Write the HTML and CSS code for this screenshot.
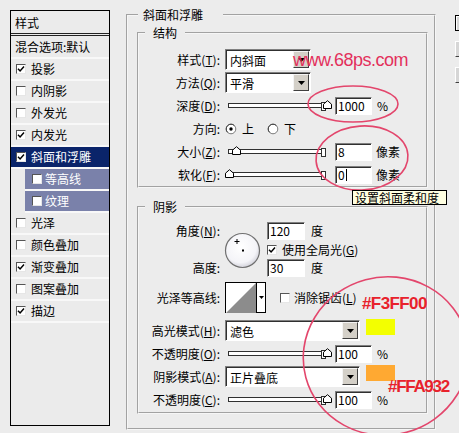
FILE: index.html
```html
<!DOCTYPE html>
<html lang="zh-CN">
<head>
<meta charset="utf-8">
<title>图层样式 - 斜面和浮雕</title>
<link rel="stylesheet" href="styles.css">
</head>
<body>
<div class="dialog">
  <div class="styles-panel">
    <div class="sp-head">样式</div>
    <div class="sp-row sp-blend">混合选项:默认</div>
    <div class="sp-row"><span class="cb"><svg viewBox="0 0 8 8"><path d="M1 3.8l2.1 2.2L7 1.6"/></svg></span>投影</div>
    <div class="sp-row"><span class="cb"></span>内阴影</div>
    <div class="sp-row"><span class="cb"></span>外发光</div>
    <div class="sp-row"><span class="cb"><svg viewBox="0 0 8 8"><path d="M1 3.8l2.1 2.2L7 1.6"/></svg></span>内发光</div>
    <div class="sp-row selected"><span class="cb"><svg viewBox="0 0 8 8"><path d="M1 3.8l2.1 2.2L7 1.6"/></svg></span>斜面和浮雕</div>
    <div class="sp-row sub"><span class="cb"></span>等高线</div>
    <div class="sp-row sub"><span class="cb"></span>纹理</div>
    <div class="sp-row"><span class="cb"></span>光泽</div>
    <div class="sp-row"><span class="cb"></span>颜色叠加</div>
    <div class="sp-row"><span class="cb"><svg viewBox="0 0 8 8"><path d="M1 3.8l2.1 2.2L7 1.6"/></svg></span>渐变叠加</div>
    <div class="sp-row"><span class="cb"></span>图案叠加</div>
    <div class="sp-row"><span class="cb"><svg viewBox="0 0 8 8"><path d="M1 3.8l2.1 2.2L7 1.6"/></svg></span>描边</div>
  </div>

  <fieldset class="group main">
    <legend class="main-legend">斜面和浮雕</legend>

    <fieldset class="group inner struct">
      <legend class="inner-legend">结构</legend>
      <div class="row">
        <span class="lbl">样式(<u>T</u>):</span>
        <div class="select w86"><span class="sel-text">内斜面</span><span class="dd"><svg viewBox="0 0 7 4" width="7" height="4"><path d="M0 0h7L3.5 4z"/></svg></span></div>
      </div>
      <div class="row">
        <span class="lbl">方法(<u>Q</u>):</span>
        <div class="select w86"><span class="sel-text">平滑</span><span class="dd"><svg viewBox="0 0 7 4" width="7" height="4"><path d="M0 0h7L3.5 4z"/></svg></span></div>
      </div>
      <div class="row">
        <span class="lbl">深度(<u>D</u>):</span>
        <div class="slider"><div class="track"></div><svg class="thumb" style="left:98px" viewBox="0 0 9 9" width="9" height="9"><path d="M0.5 8.5V4.2L4.5 0.7L8.5 4.2V8.5Z"/></svg></div>
        <span class="input">1000</span><span class="unit">%</span>
      </div>
      <div class="row">
        <span class="lbl">方向:</span>
        <span class="radio-opt"><svg class="radio" viewBox="0 0 12 12" width="12" height="12"><circle cx="6" cy="6" r="4.8" fill="#fff" stroke="#7a7a7a"/><path d="M2.6 9.4A4.8 4.8 0 0 1 9.4 2.6" fill="none" stroke="#404040"/><circle cx="6" cy="6" r="1.7" fill="#000"/></svg>上</span>
        <span class="radio-opt"><svg class="radio" viewBox="0 0 12 12" width="12" height="12"><circle cx="6" cy="6" r="4.8" fill="#fff" stroke="#7a7a7a"/><path d="M2.6 9.4A4.8 4.8 0 0 1 9.4 2.6" fill="none" stroke="#404040"/></svg>下</span>
      </div>
      <div class="row">
        <span class="lbl">大小(<u>Z</u>):</span>
        <div class="slider"><div class="track"></div><svg class="thumb" style="left:7px" viewBox="0 0 9 9" width="9" height="9"><path d="M0.5 8.5V4.2L4.5 0.7L8.5 4.2V8.5Z"/></svg></div>
        <span class="input">8</span><span class="unit px">像素</span>
      </div>
      <div class="row">
        <span class="lbl">软化(<u>F</u>):</span>
        <div class="slider"><div class="track"></div><svg class="thumb" style="left:0px" viewBox="0 0 9 9" width="9" height="9"><path d="M0.5 8.5V4.2L4.5 0.7L8.5 4.2V8.5Z"/></svg></div>
        <span class="input">0<span class="caret"></span></span><span class="unit px">像素</span>
      </div>
    </fieldset>

    <fieldset class="group inner shadow">
      <legend class="inner-legend">阴影</legend>
      <div class="angle-block">
        <div class="ab-labels">
          <span class="lbl">角度(<u>N</u>):</span>
          <span class="lbl"></span>
          <span class="lbl">高度:</span>
        </div>
        <svg class="dial" viewBox="0 0 37 37" width="37" height="37">
          <defs>
            <radialGradient id="dialfill" cx="45%" cy="40%" r="65%">
              <stop offset="0" stop-color="#ffffff"/>
              <stop offset="0.7" stop-color="#f4f4f8"/>
              <stop offset="1" stop-color="#c8c8d2"/>
            </radialGradient>
          </defs>
          <circle cx="18.5" cy="18.5" r="17" fill="url(#dialfill)" stroke="#707070" stroke-width="1.2"/>
          <path d="M13 7v5M10.5 9.5h5" stroke="#000" stroke-width="1" fill="none"/>
          <rect x="18" y="17.5" width="2" height="2" fill="#000"/>
        </svg>
        <div class="ab-fields">
          <div class="fline"><span class="input w38">120</span><span class="unit deg">度</span></div>
          <div class="fline"><span class="cb"><svg viewBox="0 0 8 8"><path d="M1 3.8l2.1 2.2L7 1.6"/></svg></span><span class="cb-text">使用全局光(<u>G</u>)</span></div>
          <div class="fline"><span class="input w38">30</span><span class="unit deg">度</span></div>
        </div>
      </div>
      <div class="row contour-row">
        <span class="lbl">光泽等高线:</span>
        <div class="contour">
          <svg class="contour-preview" viewBox="0 0 30 30" width="30" height="30"><rect width="30" height="30" fill="#fff"/><path d="M0 30L30 0V30Z" fill="#8c8c8c"/></svg>
          <span class="contour-dd"><svg viewBox="0 0 5 3" width="5" height="3"><path d="M0 0h5L2.5 3z"/></svg></span>
        </div>
        <span class="cb aa"></span><span class="cb-text">消除锯齿(<u>L</u>)</span>
      </div>
      <div class="mode-rows">
        <div class="row">
          <span class="lbl">高光模式(<u>H</u>):</span>
          <div class="select w135"><span class="sel-text">滤色</span><span class="dd"><svg viewBox="0 0 7 4" width="7" height="4"><path d="M0 0h7L3.5 4z"/></svg></span></div>
          <span class="swatch hi"></span>
        </div>
        <div class="row">
          <span class="lbl">不透明度(<u>O</u>):</span>
          <div class="slider"><div class="track"></div><svg class="thumb" style="left:98px" viewBox="0 0 9 9" width="9" height="9"><path d="M0.5 8.5V4.2L4.5 0.7L8.5 4.2V8.5Z"/></svg></div>
          <span class="input">100</span><span class="unit">%</span>
        </div>
        <div class="row">
          <span class="lbl">阴影模式(<u>A</u>):</span>
          <div class="select w135"><span class="sel-text">正片叠底</span><span class="dd"><svg viewBox="0 0 7 4" width="7" height="4"><path d="M0 0h7L3.5 4z"/></svg></span></div>
          <span class="swatch sh"></span>
        </div>
        <div class="row">
          <span class="lbl">不透明度(<u>C</u>):</span>
          <div class="slider"><div class="track"></div><svg class="thumb" style="left:98px" viewBox="0 0 9 9" width="9" height="9"><path d="M0.5 8.5V4.2L4.5 0.7L8.5 4.2V8.5Z"/></svg></div>
          <span class="input">100</span><span class="unit">%</span>
        </div>
      </div>
    </fieldset>
  </fieldset>

  <div class="buttons">
    <div class="btn default"></div>
    <div class="btn"></div>
    <div class="btn"></div>
  </div>
</div>

<svg class="marks" viewBox="0 0 459 433" width="459" height="433">
  <ellipse cx="353" cy="104" rx="45" ry="18"/>
  <ellipse cx="362" cy="158" rx="46" ry="32" transform="rotate(-4 362 158)"/>
  <ellipse cx="386" cy="356" rx="83" ry="79" transform="rotate(-15 386 356)"/>
</svg>
<div class="wm">www.68ps.com</div>
<div class="hex hex-hi">#F3FF00</div>
<div class="hex hex-sh">#FFA932</div>
<div class="tip">设置斜面柔和度</div>
</body>
</html>
```
FILE: styles.css
```css
* { box-sizing: border-box; }
html, body { margin: 0; padding: 0; }
body {
  width: 459px;
  height: 433px;
  overflow: hidden;
  position: relative;
  background: #ececec;
  color: #000;
  font-family: "Noto Sans CJK SC", "Liberation Sans", sans-serif;
  font-size: 12px;
  line-height: 14px;
}
u { text-decoration: underline; text-underline-offset: 1px; }

.dialog {
  display: flex;
  align-items: flex-start;
  padding: 8px 0 0 10px;
}

/* ---------- left styles list ---------- */
.styles-panel {
  flex-shrink: 0;
  width: 100px;
  height: 416px;
  margin-top: 2px;
  border: 1px solid #000;
  background: #ebebeb;
}
.sp-head {
  height: 21px;
  line-height: 21px;
  padding: 1px 0 0 4px;
  border-bottom: 3px double #222;
  box-sizing: content-box;
}
.sp-row {
  display: flex;
  align-items: center;
  height: 22px;
  padding-left: 5px;
  border-bottom: 2px solid #f8f8f8;
  white-space: nowrap;
}
.sp-row.sp-blend { height: 23px; padding-left: 4px; padding-top: 1px; }
.sp-row.selected { background: #0a246a; color: #fff; }
.sp-row.sub {
  margin-left: 14px;
  padding-left: 7px;
  background: #7a81aa;
  color: #fff;
}
.sp-row .cb { margin-right: 5px; }
.sp-row.sub .cb { margin-right: 3px; }

.cb {
  flex-shrink: 0;
  width: 10px;
  height: 10px;
  display: inline-flex;
  align-items: center;
  justify-content: center;
  background: #fff;
  border: 1px solid;
  border-color: #555 #e6e6e6 #e6e6e6 #555;
}
.cb svg { width: 8px; height: 8px; }
.cb path { fill: none; stroke: #000; stroke-width: 1.5; }

/* ---------- group boxes ---------- */
.group {
  margin: 0;
  min-width: 0;
  border: 2px groove #f6f6f6;
}
.main {
  flex-shrink: 0;
  width: 310px;
  height: 422px;
  margin-left: 16px;
  padding: 4px 6px 0 9px;
}
.main-legend {
  margin-left: 1px;
  padding: 0 20px 0 5px;
  line-height: 14px;
}
.inner { padding: 8px 0 0 0; }
.inner-legend {
  margin-left: 6px;
  padding: 0 8px;
  line-height: 14px;
}
.shadow { margin-top: 12px; padding-bottom: 1px; }

.row {
  display: flex;
  align-items: center;
  height: 23px;
  white-space: nowrap;
}
.lbl {
  flex-shrink: 0;
  width: 81px;
  margin-right: 5px;
  text-align: right;
  white-space: nowrap;
}

/* select */
.select {
  display: flex;
  height: 21px;
  padding: 1px;
  background: #fff;
  border: 1px solid;
  border-color: #808080 #fff #fff #808080;
  box-shadow: inset 1px 1px 0 #303030;
}
.w86 { width: 86px; }
.w135 { width: 135px; }
.sel-text { flex: 1; padding: 2px 0 0 3px; line-height: 15px; }
.dd {
  width: 16px;
  display: flex;
  align-items: center;
  justify-content: center;
  background: #d4d0c8;
  border: 1px solid;
  border-color: #f4f4f4 #404040 #404040 #f4f4f4;
}
.dd path { fill: #000; }

/* slider */
.slider {
  position: relative;
  flex-shrink: 0;
  width: 107px;
  height: 23px;
}
.track {
  width: 97px;
  height: 5px;
  margin: 9px 0 0 3px;
  background: #fff;
  border: 1px solid #303030;
  position: relative;
}
.track::after {
  content: "";
  position: absolute;
  right: -2px;
  top: -2px;
  width: 3px;
  height: 7px;
  background: #fff;
  border: 1px solid #303030;
}
.thumb {
  position: absolute;
  top: 6px;
}
.thumb path { fill: #fff; stroke: #000; stroke-width: 1; }

/* text fields */
.input {
  flex-shrink: 0;
  display: inline-flex;
  align-items: center;
  width: 37px;
  height: 18px;
  margin-left: 3px;
  padding-left: 2px;
  background: #fff;
  border: 1px solid;
  border-color: #808080 #fff #fff #808080;
  box-shadow: inset 1px 1px 0 #303030;
  line-height: 14px;
}
.input.w38 { width: 38px; margin-left: 0; }
.caret { display: inline-block; width: 1px; height: 12px; margin-left: 1px; background: #000; }
.unit { margin-left: 5px; }
.unit.px { margin-left: 4px; }

/* radios */
.radio-opt { display: inline-flex; align-items: center; }
.radio-opt:first-of-type { margin-left: 1px; }
.radio-opt + .radio-opt { margin-left: 13px; }
.radio { margin-right: 5px; }

/* shadow group */
.angle-block { display: flex; align-items: flex-start; }
.ab-labels {
  display: grid;
  grid-template-rows: 18px 19px 18px;
  align-items: center;
  margin-right: 4px;
}
.ab-labels .lbl { margin-right: 0; }
.dial { flex-shrink: 0; margin-top: 10px; }
.ab-fields {
  display: grid;
  grid-template-rows: 18px 19px 18px;
  margin-left: 6px;
}
.fline { display: flex; align-items: center; white-space: nowrap; }
.fline .cb { margin-right: 5px; }
.unit.deg { margin-left: 6px; }

.contour-row { height: 31px; margin-top: 5px; }
.contour {
  display: flex;
  width: 41px;
  height: 31px;
  border: 1px solid #000;
  background: #fff;
}
.contour-preview { display: block; }
.contour-dd {
  flex: 1;
  display: flex;
  align-items: center;
  justify-content: center;
  border-left: 1px solid #000;
}
.contour-dd path { fill: #000; }
.cb.aa { margin-left: 14px; margin-right: 4px; }

.mode-rows { margin-top: 6px; }
.swatch {
  align-self: flex-start;
  width: 29px;
  height: 16px;
  margin-left: 6px;
}
.swatch.hi { background: #f3ff00; }
.swatch.sh { background: #ffa932; }

/* buttons at right edge (only their left edges are visible) */
.buttons {
  flex-shrink: 0;
  display: flex;
  flex-direction: column;
  gap: 10px;
  margin: 7px 0 0 19px;
}
.btn {
  width: 80px;
  height: 16px;
  background: #d6d6d6;
  border: 1px solid;
  border-color: #fff #404040 #404040 #fff;
}
.btn.default { border-color: #000; box-shadow: inset 1px 1px 0 #fff; }

/* overlays: annotations drawn on the screenshot */
.marks {
  position: absolute;
  left: 0;
  top: 0;
  pointer-events: none;
}
.marks ellipse { fill: none; stroke: #e3466c; stroke-width: 1.6; }
.wm {
  position: absolute;
  left: 293px;
  top: 51px;
  font-family: "Liberation Sans", Arial, sans-serif;
  font-size: 18px;
  line-height: 18px;
  letter-spacing: -0.5px;
  color: #e3305c;
}
.hex {
  position: absolute;
  font-family: "Liberation Sans", Arial, sans-serif;
  font-weight: bold;
  font-size: 17px;
  line-height: 12px;
  color: #e8222c;
}
.hex-hi { left: 362px; top: 298px; letter-spacing: -0.6px; }
.hex-sh { left: 388px; top: 381px; letter-spacing: -1.3px; }
.tip {
  position: absolute;
  left: 352px;
  top: 190px;
  width: 95px;
  height: 15px;
  padding-left: 2px;
  background: #ffffe1;
  border: 1px solid #000;
  line-height: 13px;
  white-space: nowrap;
}
```
